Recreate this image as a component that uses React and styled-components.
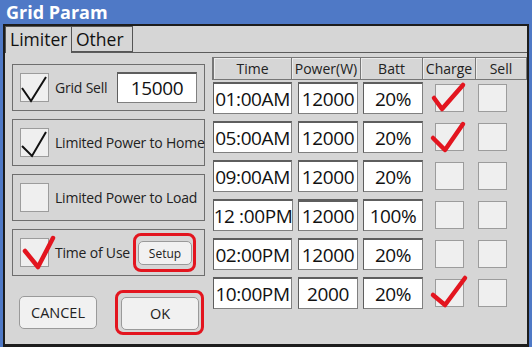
import React from "react";
import styled, { createGlobalStyle } from "styled-components";

const Global = createGlobalStyle`
  html, body { margin: 0; padding: 0; background: #4f79c6; }
  * { box-sizing: border-box; }
  #root { width: 532px; height: 347px; }
`;

const FONT = `"Open Sans", "Noto Sans", sans-serif`;
const RED = "#e3151f";

const Window = styled.div`
  width: 532px;
  height: 347px;
  background: #4f79c6;
  display: flex;
  flex-direction: column;
  font-family: ${FONT};
`;

const TitleBar = styled.div`
  height: 24px;
  line-height: 24px;
  padding-left: 6px;
  color: #fff;
  font-weight: 700;
  font-size: 18px;
`;

const Panel = styled.div`
  flex: 1;
  margin: 0 3px;
  border: 2px solid #1d1d1d;
  border-bottom-width: 3px;
  background: #d6d6d6;
  display: flex;
  flex-direction: column;
`;

const TabStrip = styled.div`
  height: 27px;
  display: flex;
  border-bottom: 1px solid #5c5c5c;
`;

const Tab = styled.div`
  width: ${(p) => p.$w}px;
  border: 1px solid #555;
  border-left-width: ${(p) => (p.$first ? 1 : 0)}px;
  border-bottom: ${(p) => (p.$active ? "none" : "1px solid #555")};
  margin-bottom: ${(p) => (p.$active ? -1 : 0)}px;
  background: #d6d6d6;
  font-size: 17.5px;
  color: #111;
  line-height: 25px;
  padding-left: 4px;
  position: relative;
  z-index: ${(p) => (p.$active ? 1 : 0)};
`;

const Content = styled.div`
  display: flex;
  gap: 7px;
  padding-left: 7px;
`;

const LeftCol = styled.div`
  width: 193px;
  padding-top: 11px;
  display: flex;
  flex-direction: column;
  gap: 8px;
`;

const Group = styled.div`
  height: 47px;
  border: 1px solid #6e6e6e;
  display: flex;
  align-items: center;
  padding-left: 7px;
  padding-right: 7px;
`;

const Box = styled.div`
  position: relative;
  width: 29px;
  height: ${(p) => p.$h || 29}px;
  flex: none;
  background: #efefef;
  border: 1px solid #9c9c9c;
`;

const Tick = styled.svg`
  position: absolute;
  left: 0;
  top: 0;
  width: 29px;
  height: 29px;
  overflow: visible;
  pointer-events: none;
`;

const Label = styled.span`
  margin-left: 6px;
  font-size: 14px;
  letter-spacing: -0.2px;
  color: #222;
  white-space: nowrap;
`;

const Field = styled.div`
  width: ${(p) => p.$w}px;
  height: ${(p) => p.$h || 32}px;
  margin-left: ${(p) => (p.$auto ? "auto" : "0")};
  background: #fff;
  border: 1px solid #808080;
  border-top: ${(p) => (p.$heavy ? 3 : 2)}px solid #5e5e5e;
  border-left-color: #5e5e5e;
  display: flex;
  align-items: center;
  justify-content: center;
  font-size: 19px;
  letter-spacing: -0.4px;
  color: #111;
  white-space: nowrap;
`;

const Highlight = styled.div`
  border: 3px solid ${RED};
  border-radius: 8px;
  padding: ${(p) => p.$pad};
  margin-left: ${(p) => (p.$auto ? "auto" : "0")};
  margin-right: ${(p) => p.$mr || 0}px;
  display: flex;
`;

const Button = styled.div`
  width: ${(p) => p.$w}px;
  height: ${(p) => p.$h}px;
  background: #f1f1f1;
  border: 1px solid #9a9a9a;
  border-radius: 5px;
  display: flex;
  align-items: center;
  justify-content: center;
  font-size: ${(p) => p.$fs}px;
  color: #222;
`;

const ButtonRow = styled.div`
  margin-top: 6px;
  padding-left: 7px;
  display: flex;
  align-items: center;
  gap: 18px;
`;

const Table = styled.div`
  margin-top: 4px;
  display: flex;
  flex-direction: column;
`;

const COLS = "80px 69px 62px 53px 51px";

const HeaderRow = styled.div`
  display: grid;
  grid-template-columns: ${COLS};
  height: 23px;
`;

const HeaderCell = styled.div`
  border: 1px solid #777;
  border-left-width: ${(p) => (p.$first ? 2 : 0)}px;
  box-shadow: inset 1px 1px 0 #ececec;
  display: flex;
  align-items: center;
  justify-content: center;
  font-size: 14px;
  color: #222;
`;

const Rows = styled.div`
  padding-top: 2px;
  display: flex;
  flex-direction: column;
  gap: 7px;
`;

const DataRow = styled.div`
  display: grid;
  grid-template-columns: ${COLS};
  height: 32px;
  align-items: center;
`;

const Cell = styled.div`
  display: flex;
  justify-content: ${(p) => (p.$start ? "flex-start" : "center")};
  padding-left: ${(p) => p.$pl || 0}px;
`;

const BlackCheck = ({ pts }) => (
  <Tick viewBox="0 0 29 29">
    <polyline points={pts} fill="none" stroke="#111" strokeWidth="2" strokeLinejoin="miter" />
  </Tick>
);

const RedCheck = ({ pts }) => (
  <Tick viewBox="0 0 29 29">
    <polyline points={pts} fill="none" stroke={RED} strokeWidth="4.5" strokeLinecap="round" strokeLinejoin="round" />
  </Tick>
);

const rows = [
  { t: "01:00AM", p: "12000", b: "20%", c: "-2,13 6,24 27,0" },
  { t: "05:00AM", p: "12000", b: "20%", c: "-3,14 9,26 27,0" },
  { t: "09:00AM", p: "12000", b: "20%" },
  { t: "12 :00PM", p: "12000", b: "100%", heavy: true },
  { t: "02:00PM", p: "12000", b: "20%" },
  { t: "10:00PM", p: "2000", b: "20%", c: "-3,15 9,25 29,-2" },
];

export default function App() {
  return (
    <>
      <Global />
      <Window>
        <TitleBar>Grid Param</TitleBar>
        <Panel>
          <TabStrip>
            <Tab $w={67} $first $active>Limiter</Tab>
            <Tab $w={61}>Other</Tab>
          </TabStrip>
          <Content>
            <LeftCol>
              <Group>
                <Box>
                  <BlackCheck pts="1,14 10,27 25,3" />
                </Box>
                <Label>Grid Sell</Label>
                <Field $w={80} $h={31} $auto>15000</Field>
              </Group>
              <Group>
                <Box>
                  <BlackCheck pts="1,17 11,27 25,3" />
                </Box>
                <Label>Limited Power to Home</Label>
              </Group>
              <Group>
                <Box />
                <Label>Limited Power to Load</Label>
              </Group>
              <Group>
                <Box>
                  <RedCheck pts="4,12 17,28 32,-1" />
                </Box>
                <Label>Time of Use</Label>
                <Highlight $auto $mr={1} $pad="5px 1px 4px 2px">
                  <Button $w={54} $h={24} $fs={12}>Setup</Button>
                </Highlight>
              </Group>
              <ButtonRow>
                <Button $w={78} $h={33} $fs={14.5}>CANCEL</Button>
                <Highlight $pad="4px 2px 2px 3px">
                  <Button $w={78} $h={33} $fs={14.5}>OK</Button>
                </Highlight>
              </ButtonRow>
            </LeftCol>
            <Table>
              <HeaderRow>
                <HeaderCell $first>Time</HeaderCell>
                <HeaderCell>Power(W)</HeaderCell>
                <HeaderCell>Batt</HeaderCell>
                <HeaderCell>Charge</HeaderCell>
                <HeaderCell>Sell</HeaderCell>
              </HeaderRow>
              <Rows>
                {rows.map((r) => (
                  <DataRow key={r.t}>
                    <Cell $start $pl={1}>
                      <Field $w={80}>{r.t}</Field>
                    </Cell>
                    <Cell $start $pl={6}>
                      <Field $w={60} $heavy={r.heavy}>{r.p}</Field>
                    </Cell>
                    <Cell $start $pl={2}>
                      <Field $w={60}>{r.b}</Field>
                    </Cell>
                    <Cell>
                      <Box $h={28}>{r.c && <RedCheck pts={r.c} />}</Box>
                    </Cell>
                    <Cell $start $pl={2}>
                      <Box $h={28} />
                    </Cell>
                  </DataRow>
                ))}
              </Rows>
            </Table>
          </Content>
        </Panel>
      </Window>
    </>
  );
}
